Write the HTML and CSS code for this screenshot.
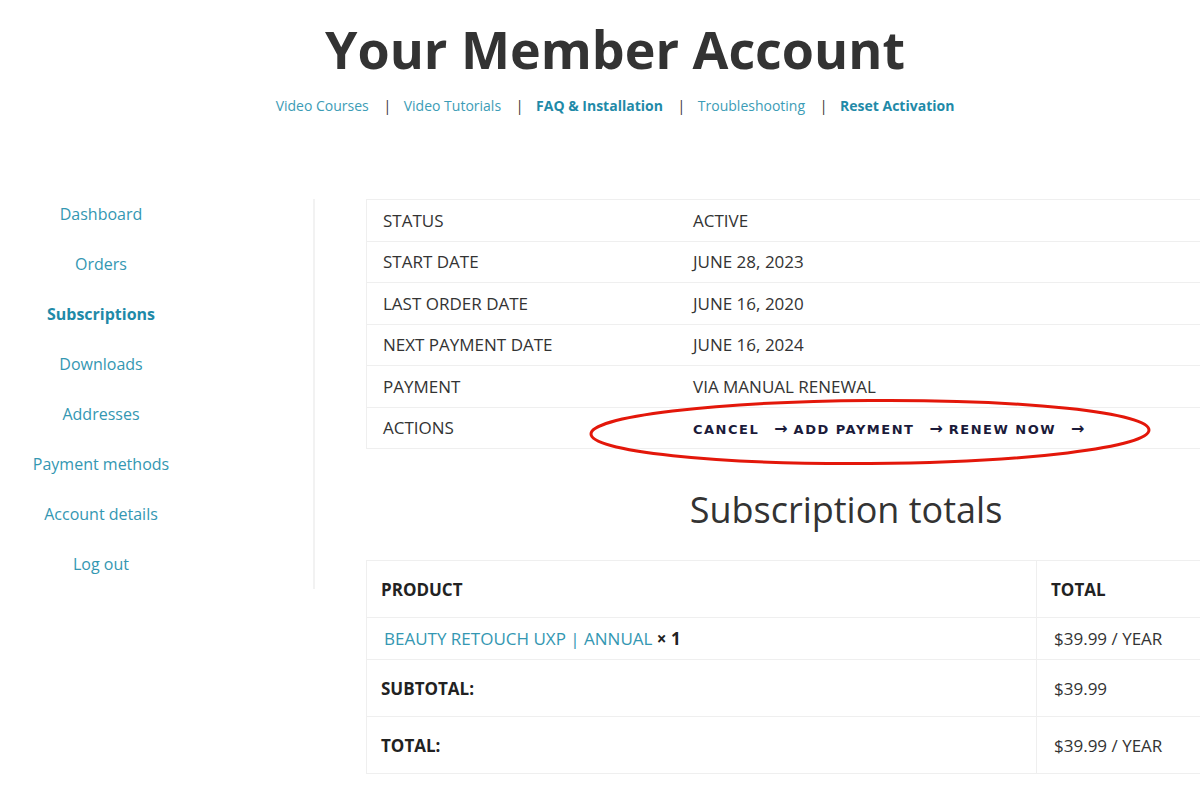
FILE: index.html
```html
<!DOCTYPE html>
<html lang="en">
<head>
    <meta charset="UTF-8">
    <meta name="viewport" content="width=device-width, initial-scale=1.0">
    <title>Your Member Account</title>
    <link rel="stylesheet" href="styles.css">
</head>
<body>
    <header class="page-header">
        <h1 class="page-title">Your Member Account</h1>
        <nav class="top-nav">
            <a href="#" class="top-link">Video Courses</a>
            <span class="sep">|</span>
            <a href="#" class="top-link">Video Tutorials</a>
            <span class="sep">|</span>
            <a href="#" class="top-link strong">FAQ &amp; Installation</a>
            <span class="sep">|</span>
            <a href="#" class="top-link">Troubleshooting</a>
            <span class="sep">|</span>
            <a href="#" class="top-link strong">Reset Activation</a>
        </nav>
    </header>

    <div class="account">
        <aside class="side">
            <ul class="side-menu">
                <li><a href="#">Dashboard</a></li>
                <li><a href="#">Orders</a></li>
                <li class="active"><a href="#">Subscriptions</a></li>
                <li><a href="#">Downloads</a></li>
                <li><a href="#">Addresses</a></li>
                <li><a href="#">Payment methods</a></li>
                <li><a href="#">Account details</a></li>
                <li><a href="#">Log out</a></li>
            </ul>
        </aside>

        <main class="content">
            <div class="details-wrap">
                <table class="details">
                    <tr><td class="key">Status</td><td>Active</td></tr>
                    <tr><td class="key">Start date</td><td>June 28, 2023</td></tr>
                    <tr><td class="key">Last order date</td><td>June 16, 2020</td></tr>
                    <tr><td class="key">Next payment date</td><td>June 16, 2024</td></tr>
                    <tr><td class="key">Payment</td><td>Via Manual Renewal</td></tr>
                    <tr>
                        <td class="key">Actions</td>
                        <td><a href="#" class="action">Cancel</a><a href="#" class="action">Add payment</a><a href="#" class="action">Renew now</a></td>
                    </tr>
                </table>
                <!-- 빨간 원 표시 -->
                <svg class="circle-mark" width="566" height="72" viewBox="0 0 566 72">
                    <ellipse cx="283" cy="35" rx="279" ry="31.5" fill="none" stroke="#e3170a" stroke-width="3" transform="rotate(-0.4 283 35)"/>
                </svg>
            </div>

            <h2 class="totals-title">Subscription totals</h2>

            <table class="totals">
                <tr class="head">
                    <th>Product</th>
                    <th class="col-total">Total</th>
                </tr>
                <tr class="item">
                    <td><a href="#" class="product-link">Beauty Retouch UXP | Annual</a> <strong class="qty">× 1</strong></td>
                    <td class="col-total">$39.99 / year</td>
                </tr>
                <tr class="sum">
                    <th>Subtotal:</th>
                    <td class="col-total">$39.99</td>
                </tr>
                <tr class="sum">
                    <th>Total:</th>
                    <td class="col-total">$39.99 / year</td>
                </tr>
            </table>
        </main>
    </div>
</body>
</html>
```

FILE: styles.css
```css
/* 기본 스타일 */
body {
    margin: 0;
    font-family: "Open Sans", sans-serif;
    color: #333333;
    background: #ffffff;
    overflow: hidden;
}

a {
    color: #3497b2;
    text-decoration: none;
}

.page-header {
    text-align: center;
    padding-top: 18px;
    padding-left: 30px;
}

.page-title {
    margin: 0;
    font-size: 52px;
    font-weight: bold;
    color: #333333;
    line-height: 62px;
}

.top-nav {
    margin-top: 16px;
    font-size: 14px;
}

.top-link {
    color: #3c9cb6;
}

.top-link.strong {
    font-weight: bold;
    color: #1f8aa8;
}

.sep {
    color: #333333;
    margin: 0 9px 0 11px;
}

/* 계정 영역 */
.account {
    display: flex;
    margin-top: 84px;
}

.side {
    width: 315px;
    flex-shrink: 0;
}

.side-menu {
    list-style: none;
    margin: 0;
    padding: 0 111px 0 0;
    width: 315px;
    box-sizing: border-box;
    text-align: center;
    border-right: 2px solid #f2f2f2;
}

.side-menu li {
    height: 50px;
    line-height: 30px;
    font-size: 16px;
}

.side-menu li:last-child {
    height: 40px;
}

.side-menu a {
    color: #3497b2;
}

.side-menu .active a {
    font-weight: bold;
    color: #1f8aa8;
}

.content {
    margin-left: 51px;
    width: 900px;
    flex-shrink: 0;
}

/* 구독 상세 */
.details-wrap {
    position: relative;
}

.details {
    width: 100%;
    border-collapse: collapse;
    font-size: 17px;
    text-transform: uppercase;
}

.details td {
    height: 40.5px;
    padding: 0 16px;
    border: 1px solid #efefef;
    border-right: none;
    vertical-align: middle;
}

.details .key {
    width: 278px;
}

.details td + td {
    border-left: none;
}

.action {
    color: #1b1b3a;
    font-family: "DejaVu Sans", sans-serif;
    font-weight: bold;
    font-size: 13px;
    letter-spacing: 1.5px;
}

.action::after {
    content: "→";
    margin-left: 15px;
    margin-right: 6px;
    font-size: 16px;
    letter-spacing: 0;
}

.circle-mark {
    position: absolute;
    left: 221px;
    top: 198px;
    pointer-events: none;
}

/* 합계 */
.totals-title {
    text-align: center;
    font-weight: normal;
    font-size: 36px;
    margin: 36px 0 26px 0;
    padding-left: 60px;
}

.totals {
    width: 100%;
    border-collapse: collapse;
    font-size: 17px;
    text-transform: uppercase;
}

.totals th,
.totals td {
    border: 1px solid #efefef;
    text-align: left;
    padding: 0 14px;
}

.totals th {
    font-weight: bold;
    color: #222222;
}

.totals .head th,
.totals .sum th,
.totals .sum td {
    height: 56px;
}

.totals .item td {
    height: 41px;
}

.totals .col-total {
    width: 198px;
    border-right: none;
}

.totals td.col-total {
    padding-left: 17px;
}

.product-link {
    color: #3497b2;
    padding-left: 3px;
}

.qty {
    color: #222222;
}
```
